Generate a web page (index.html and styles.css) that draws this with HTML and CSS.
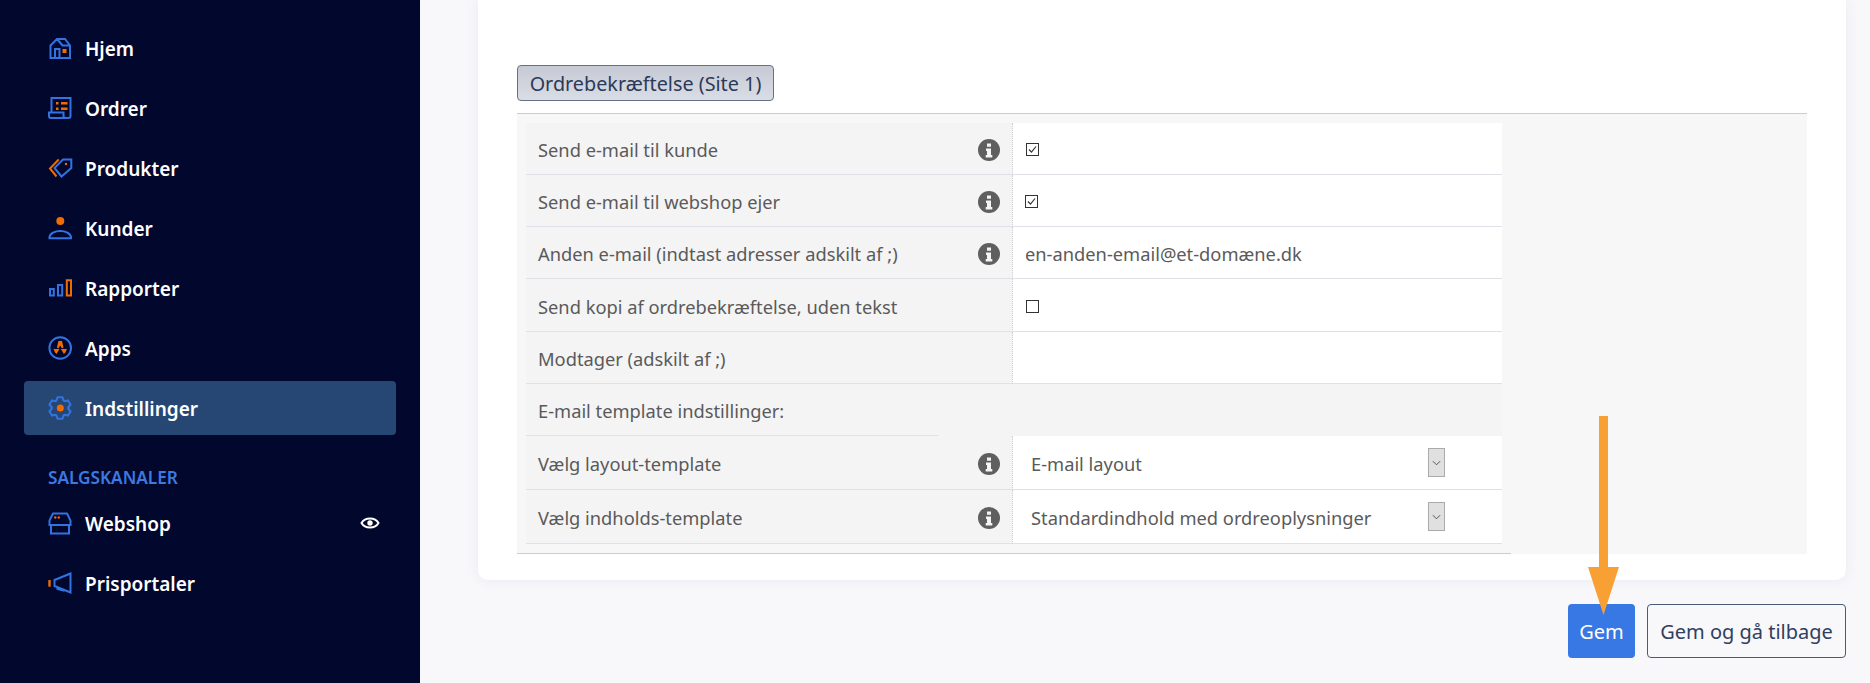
FILE: index.html
```html
<!DOCTYPE html>
<html lang="da">
<head>
<meta charset="utf-8">
<title>Ordrebekræftelse</title>
<link rel="stylesheet" href="styles.css">
</head>
<body>
<div class="app">
  <nav class="sidebar">
    <a class="nav-item">
      <svg class="ico" viewBox="0 0 24 24"><path class="b" d="M2.500 22V9.500L9 3h8l5 6.500V22zM9 3l5.500 6.500H22M7 22v-9h4.500v9"/><rect class="o" x="14.500" y="13" width="4" height="4"/></svg>
      <span>Hjem</span>
    </a>
    <a class="nav-item">
      <svg class="ico" viewBox="0 0 24 24"><path class="b" d="M3.500 16.500V2h19v18a2 2 0 0 1-2 2H3a2 2 0 0 1-2-2v-3.500h14.500V20a2 2 0 0 0 2 2"/><path class="of" d="M8 6h2.500v2.500H8zM13 6h6.500v2.500H13zM8 11.500h2.500V14H8zM13 11.500h6.500V14H13z"/></svg>
      <span>Ordrer</span>
    </a>
    <a class="nav-item">
      <svg class="ico" viewBox="0 0 24 24"><path class="ol" d="M10.700 3.500 2 12.500l6.500 8"/><path class="b" d="M15 3.500h8.300V12l-9.800 8.500L6.500 12z"/><circle class="o" cx="18" cy="8" r="1.200"/></svg>
      <span>Produkter</span>
    </a>
    <a class="nav-item">
      <svg class="ico" viewBox="0 0 24 24"><circle class="o" cx="12.300" cy="5" r="4"/><path class="b" d="M1.500 22.300V21c.5-3.800 5.500-6 10.700-6s10.300 2.200 10.800 6v1.300z"/></svg>
      <span>Kunder</span>
    </a>
    <a class="nav-item">
      <svg class="ico" viewBox="0 0 24 24"><path class="b" d="M2 13h3.800v6.500H2zM10 9h4.200v10.500H10z"/><path class="ol" d="M18.800 4.300h4.200v15.200h-4.200z"/></svg>
      <span>Rapporter</span>
    </a>
    <a class="nav-item">
      <svg class="ico" viewBox="0 0 24 24"><circle class="b" cx="12.200" cy="12" r="10.800"/><path class="of" d="M10.400 5h3.600l1.500 6.500-1.500 1-1.800-3-1.800 3-1.500-1zM5.500 13h6l-3 5L7 16.500zM18.900 13h-6l3 5 1.500-1.500z"/></svg>
      <span>Apps</span>
    </a>
    <a class="nav-item active">
      <svg class="ico" viewBox="0 0 24 24"><defs><path id="tooth" class="b" d="M7.060 5.200 8.580 4.330 9.530 1.280h4.940l.95 3.050 1.520.87"/></defs><use href="#tooth"/><use href="#tooth" transform="rotate(60 12 12)"/><use href="#tooth" transform="rotate(120 12 12)"/><use href="#tooth" transform="rotate(180 12 12)"/><use href="#tooth" transform="rotate(240 12 12)"/><use href="#tooth" transform="rotate(300 12 12)"/><circle class="o" cx="12.300" cy="12" r="3.500"/></svg>
      <span>Indstillinger</span>
    </a>
    <div class="nav-title">SALGSKANALER</div>
    <a class="nav-item">
      <svg class="ico" viewBox="0 0 24 24"><path class="b" d="M1.500 14V9.500L5 2.500h14l3.500 7V14zM3 14v8.500h18V14"/><circle class="o" cx="7.300" cy="6.500" r="1.200"/><circle class="o" cx="10.800" cy="6.500" r="1.200"/></svg>
      <span>Webshop</span>
      <svg class="eye" viewBox="0 0 20 14"><path d="M1.500 7C5 1 15 1 18.500 7 15 13 5 13 1.500 7z"/><circle cx="10" cy="7" r="2.700"/></svg>
    </a>
    <a class="nav-item">
      <svg class="ico" viewBox="0 0 24 24"><path class="of" d="M.3 9h2.400v6.700H.3z"/><path class="b" d="M22.500 2.500 6.500 9v6l16 6.500zM9.500 16.500V18l7 1.800"/></svg>
      <span>Prisportaler</span>
    </a>
  </nav>

  <main class="main">
    <section class="card">
      <button class="legend" type="button">Ordrebekræftelse (Site 1)</button>
      <div class="group">
        <div class="group-inner">
          <div class="row h52">
            <div class="label"><span>Send e-mail til kunde</span><svg class="info" viewBox="0 0 22 22"><use href="#i-info"/></svg></div>
            <div class="value pad13"><svg class="chk" viewBox="0 0 13 13"><rect x=".5" y=".5" width="12" height="12"/><path d="m3 6.500 2.500 2.700L10 3.500"/></svg></div>
          </div>
          <div class="row h52">
            <div class="label"><span>Send e-mail til webshop ejer</span><svg class="info" viewBox="0 0 22 22"><use href="#i-info"/></svg></div>
            <div class="value pad12"><svg class="chk" viewBox="0 0 13 13"><rect x=".5" y=".5" width="12" height="12"/><path d="m3 6.500 2.500 2.700L10 3.500"/></svg></div>
          </div>
          <div class="row h52">
            <div class="label"><span>Anden e-mail (indtast adresser adskilt af ;)</span><svg class="info" viewBox="0 0 22 22"><use href="#i-info"/></svg></div>
            <div class="value pad12">en-anden-email@et-domæne.dk</div>
          </div>
          <div class="row h53">
            <div class="label"><span>Send kopi af ordrebekræftelse, uden tekst</span></div>
            <div class="value pad13"><svg class="chk" viewBox="0 0 13 13"><rect x=".5" y=".5" width="12" height="12"/></svg></div>
          </div>
          <div class="row h52">
            <div class="label"><span>Modtager (adskilt af ;)</span></div>
            <div class="value pad12"></div>
          </div>
          <div class="row-head">
            <div class="head-label">E-mail template indstillinger:</div>
          </div>
          <div class="row h54">
            <div class="label"><span>Vælg layout-template</span><svg class="info" viewBox="0 0 22 22"><use href="#i-info"/></svg></div>
            <div class="value pad18"><div class="select"><span>E-mail layout</span><span class="arrow"><svg viewBox="0 0 10 6"><path d="m1 1 4 4 4-4"/></svg></span></div></div>
          </div>
          <div class="row h54">
            <div class="label"><span>Vælg indholds-template</span><svg class="info" viewBox="0 0 22 22"><use href="#i-info"/></svg></div>
            <div class="value pad18"><div class="select"><span>Standardindhold med ordreoplysninger</span><span class="arrow"><svg viewBox="0 0 10 6"><path d="m1 1 4 4 4-4"/></svg></span></div></div>
          </div>
        </div>
      </div>
    </section>
    <div class="actions">
      <button class="btn primary" type="button">Gem</button>
      <button class="btn outline" type="button">Gem og gå tilbage</button>
    </div>
  </main>
</div>

<svg class="defs" width="0" height="0"><defs>
  <g id="i-info"><circle cx="11" cy="11" r="11" fill="#5f5f5f"/><path fill="#f4f4f5" d="M9 4.500h4v3.300H9zM8 9.500h5v6.500h1.300v2.500H7.700V16H9v-4H8z"/></g>
</defs></svg>

<svg class="callout" viewBox="0 0 31 200"><path d="M11 0h9v151h11l-15.500 48L0 151h11z"/></svg>
</body>
</html>
```
FILE: styles.css
```css
* { box-sizing: border-box; }
html, body { margin: 0; height: 683px; overflow: hidden; }
body {
  position: relative;
  background: #f8f8fb;
  font-family: "Noto Sans", "Open Sans", sans-serif;
  color: #5a5a5a;
}
.app { display: flex; height: 683px; }
.defs { position: absolute; }

/* sidebar */
.sidebar {
  width: 420px;
  flex: none;
  background: #02072e;
  padding: 21px 24px 0;
  display: flex;
  flex-direction: column;
  gap: 6px;
}
.nav-item {
  height: 54px;
  display: flex;
  align-items: center;
  gap: 13px;
  padding: 0 16px 0 24px;
  color: #fff;
  font-size: 19px;
  font-weight: 600;
  border-radius: 4px;
}
.nav-item span { position: relative; top: 1px; }
.nav-item.active { background: #264773; }
.ico { width: 24px; height: 24px; flex: none; overflow: visible; }
.b { fill: none; stroke: #3273e0; stroke-width: 2; }
.ol { fill: none; stroke: #f06c00; stroke-width: 2; }
.o, .of { fill: #f06c00; }
.eye { width: 20px; height: 14px; margin-left: auto; }
.eye path { fill: none; stroke: #fff; stroke-width: 2; }
.eye circle { fill: #fff; }
.nav-title {
  height: 49px;
  padding: 26px 0 0 24px;
  color: #3c7ae0;
  font-size: 17.200px;
  font-weight: 600;
  line-height: 22px;
}

/* main */
.main { flex: 1; padding: 0 24px 0 58px; min-width: 0; }
.card {
  height: 580px;
  background: #fff;
  border-radius: 0 0 10px 10px;
  box-shadow: 0 0 14px rgba(40, 50, 90, .07);
  padding: 65px 39px 0;
}
.legend {
  display: block;
  height: 36px;
  width: 257px;
  margin: 0 0 12px;
  padding: 0;
  background: linear-gradient(#c6cad5, #dadde5);
  border: 1px solid #667084;
  border-radius: 4px;
  color: #2b3a58;
  font: 19.800px "Noto Sans", sans-serif;
}
.group { background: #f7f7f8; border-top: 1px solid #ccc; height: 441px; }
.group-inner { width: 994px; padding: 9px; border-bottom: 1px solid #ccc; }
.row { display: grid; grid-template-columns: 487px 489px; }
.h52 { height: 52px; }
.h53 { height: 53px; }
.h54 { height: 54px; }
.label, .value, .head-label {
  font-size: 18.300px;
  display: flex;
  align-items: center;
  border-bottom: 1px solid #e0e0e6;
  padding-top: 2px;
}
.label {
  justify-content: space-between;
  padding-left: 12px;
  padding-right: 12px;
  background: #f4f4f5;
  border-right: 1px dotted #cfcfd4;
}
.value { background: #fff; }
.pad12 { padding-left: 12px; }
.pad13 { padding-left: 13px; }
.pad18 { padding-left: 18px; }
.row-head { height: 52px; background: #f4f4f5; }
.head-label { width: 412px; height: 52px; padding-left: 12px; }
.info { width: 22px; height: 22px; flex: none; }
.chk { width: 13px; height: 13px; }
.chk rect { fill: #fff; stroke: #333; }
.chk path { fill: none; stroke: #333; stroke-width: 1.200; }
.select { width: 414px; display: flex; justify-content: space-between; align-items: center; }
.arrow {
  width: 17px;
  height: 29px;
  margin-bottom: 2px;
  background: #e0e0e0;
  border: 1px solid #aaa;
  display: flex;
  align-items: center;
  justify-content: center;
}
.arrow svg { width: 9px; height: 6px; }
.arrow path { fill: none; stroke: #444; stroke-width: 1; }

/* actions */
.actions { display: flex; justify-content: flex-end; gap: 12px; margin-top: 24px; }
.btn { height: 54px; border-radius: 4px; font: 20px "Noto Sans", sans-serif; padding: 0; }
.primary { width: 67px; background: #3878e4; border: 0; color: #fff; }
.outline { width: 199px; background: transparent; border: 1px solid #4a5a78; color: #2f4060; }

.callout { position: absolute; left: 1588px; top: 416px; width: 31px; height: 200px; }
.callout path { fill: #f9a035; }
```
